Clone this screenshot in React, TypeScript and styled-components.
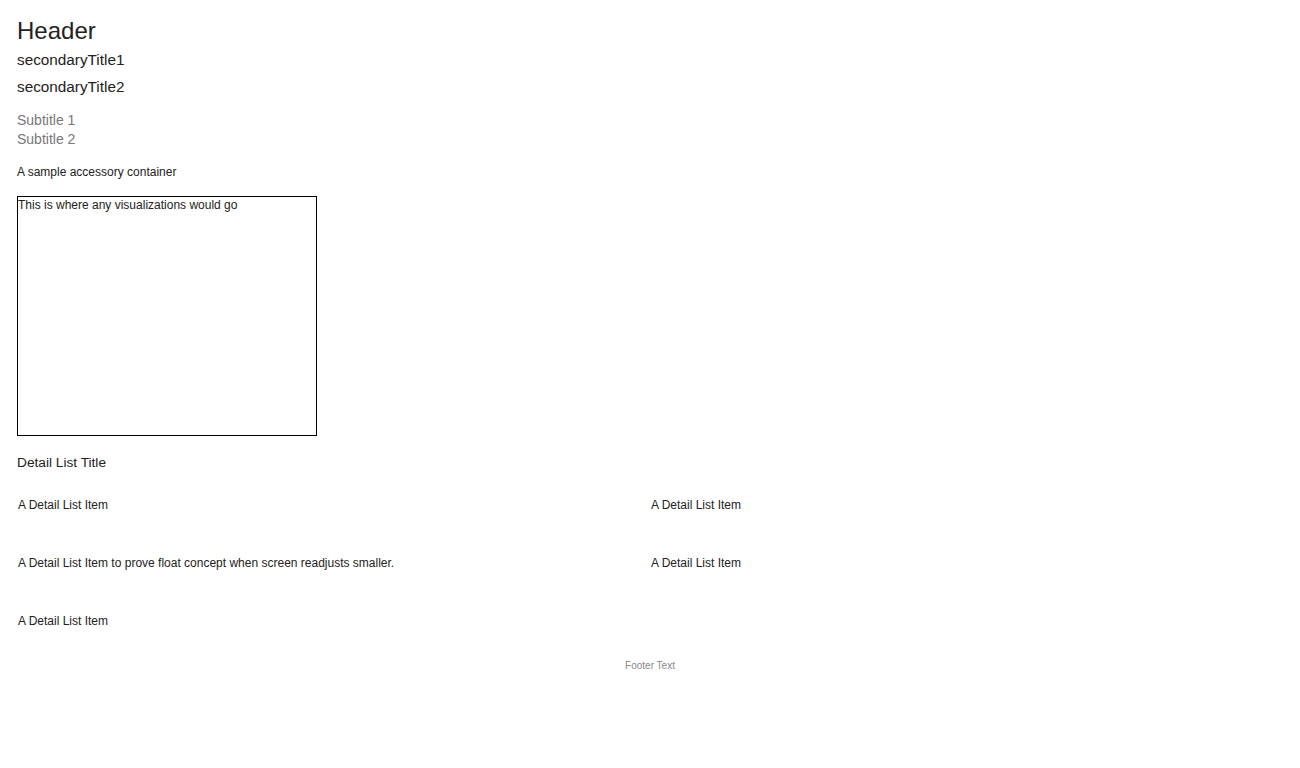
import styled, { createGlobalStyle } from "styled-components";

const GlobalStyle = createGlobalStyle`
  body {
    margin: 0;
    background: #fff;
    font-family: "Liberation Sans", Arial, sans-serif;
    color: #222;
  }
`;

const Page = styled.div`
  padding: 16px 17px 0 17px;
  display: flex;
  flex-direction: column;
`;

const Header = styled.h1`
  margin: 0;
  font-size: 24px;
  font-weight: 400;
  line-height: 30px;
  color: #222;
`;

const SecondaryTitle = styled.h2`
  margin: 0;
  font-size: 15.3px;
  font-weight: 400;
  line-height: 27px;
  color: #222;
`;

const Subtitles = styled.div`
  margin-top: 11px;
  display: flex;
  flex-direction: column;
`;

const Subtitle = styled.span`
  font-size: 14px;
  line-height: 19px;
  color: #777;
`;

const Accessory = styled.div`
  margin-top: 16px;
  font-size: 12px;
  line-height: 14px;
  color: #222;
`;

const VizBox = styled.div`
  margin-top: 17px;
  width: 300px;
  height: 240px;
  box-sizing: border-box;
  border: 1px solid #000;
  font-size: 12px;
  line-height: 16px;
  color: #222;
`;

const DetailTitle = styled.h3`
  margin: 19px 0 0 0;
  font-size: 13.7px;
  font-weight: 400;
  line-height: 16px;
  color: #222;
`;

const DetailList = styled.ul`
  list-style: none;
  margin: 27px 0 0 0;
  padding: 0;
  display: grid;
  grid-template-columns: 1fr 1fr;
  grid-auto-rows: 58px;
`;

const DetailItem = styled.li`
  padding-left: 1px;
  font-size: 12px;
  line-height: 14px;
  color: #222;
`;

const Footer = styled.footer`
  margin-top: -12px;
  text-align: center;
  font-size: 10px;
  line-height: 12px;
  color: #888;
`;

const items = [
  "A Detail List Item",
  "A Detail List Item",
  "A Detail List Item to prove float concept when screen readjusts smaller.",
  "A Detail List Item",
  "A Detail List Item",
];

export default function App() {
  return (
    <>
      <GlobalStyle />
      <Page>
        <Header>Header</Header>
        <SecondaryTitle>secondaryTitle1</SecondaryTitle>
        <SecondaryTitle>secondaryTitle2</SecondaryTitle>
        <Subtitles>
          <Subtitle>Subtitle 1</Subtitle>
          <Subtitle>Subtitle 2</Subtitle>
        </Subtitles>
        <Accessory>A sample accessory container</Accessory>
        <VizBox>This is where any visualizations would go</VizBox>
        <DetailTitle>Detail List Title</DetailTitle>
        <DetailList>
          {items.map((item, i) => (
            <DetailItem key={i}>{item}</DetailItem>
          ))}
        </DetailList>
        <Footer>Footer Text</Footer>
      </Page>
    </>
  );
}
